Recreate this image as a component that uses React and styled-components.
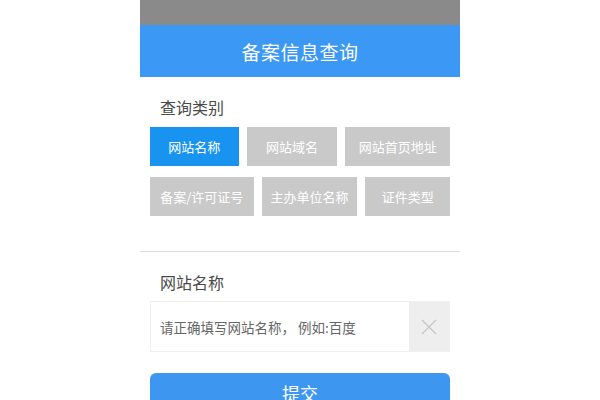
import React, { useState } from "react";
import styled, { createGlobalStyle } from "styled-components";

const Global = createGlobalStyle`
  html, body { margin: 0; padding: 0; background: #fff; }
  body { font-family: "Noto Sans CJK SC", "Noto Sans", sans-serif; }
`;

const Phone = styled.div`
  width: 320px;
  margin: 0 auto;
  background: #fff;
  height: 400px;
  overflow: hidden;
`;

const StatusBar = styled.div`
  height: 25px;
  background: #8a8a8a;
`;

const Header = styled.header`
  height: 52px;
  background: #3b98f5;
  color: #fff;
  font-size: 19px;
  display: flex;
  align-items: center;
  justify-content: center;
  letter-spacing: 0.5px;
`;

const Section = styled.section`
  padding: ${(p) => p.$pad};
`;

const Label = styled.div`
  font-size: 16px;
  line-height: 22px;
  color: #4a4a4a;
  padding-left: 10px;
  margin-bottom: ${(p) => p.$mb}px;
`;

const Row = styled.div`
  display: flex;
  gap: 8px;
  margin-bottom: ${(p) => p.$mb || 0}px;
`;

const TypeButton = styled.button`
  width: ${(p) => p.$w}px;
  height: 39px;
  border: none;
  padding: 0;
  background: ${(p) => (p.$active ? "#1894f0" : "#c9c9c9")};
  color: #fff;
  font-family: inherit;
  font-size: 13px;
  cursor: pointer;
`;

const Divider = styled.hr`
  margin: 35px 0 0;
  border: none;
  border-top: 1px solid #dcdcdc;
`;

const InputBox = styled.div`
  display: flex;
  height: 51px;
  border: 1px solid #f0f0f0;
  box-sizing: border-box;
`;

const Input = styled.input`
  flex: 1;
  min-width: 0;
  border: none;
  outline: none;
  padding: 0 0 0 9px;
  font-family: inherit;
  font-size: 13.5px;
  color: #333;
  &::placeholder { color: #666; }
`;

const Clear = styled.div`
  width: 40px;
  background: #eeeeee;
  display: flex;
  align-items: center;
  justify-content: center;
`;

const Submit = styled.button`
  display: block;
  width: 100%;
  height: 40px;
  margin-top: 21px;
  border: none;
  border-radius: 6px;
  background: #3d97f1;
  color: #fff;
  font-family: inherit;
  font-size: 18px;
  line-height: 40px;
  padding: 0;
`;

const rows = [
  [
    ["网站名称", 89],
    ["网站域名", 91],
    ["网站首页地址", 105],
  ],
  [
    ["备案/许可证号", 104],
    ["主办单位名称", 96],
    ["证件类型", 85],
  ],
];

export default function App() {
  const [active, setActive] = useState("网站名称");
  return (
    <>
      <Global />
      <Phone>
        <StatusBar />
        <Header>备案信息查询</Header>
        <Section $pad="19px 10px 0">
          <Label $mb={9}>查询类别</Label>
          {rows.map((r, i) => (
            <Row key={i} $mb={i === 0 ? 11 : 0}>
              {r.map(([t, w]) => (
                <TypeButton key={t} $w={w} $active={active === t} onClick={() => setActive(t)}>
                  {t}
                </TypeButton>
              ))}
            </Row>
          ))}
        </Section>
        <Divider />
        <Section $pad="19px 10px 0">
          <Label $mb={8}>网站名称</Label>
          <InputBox>
            <Input placeholder="请正确填写网站名称， 例如:百度" />
            <Clear>
              <svg width="16" height="16" viewBox="0 0 16 16">
                <path d="M1 1L15 15M15 1L1 15" stroke="#c4c4c4" strokeWidth="1.2" fill="none" />
              </svg>
            </Clear>
          </InputBox>
          <Submit>提交</Submit>
        </Section>
      </Phone>
    </>
  );
}
